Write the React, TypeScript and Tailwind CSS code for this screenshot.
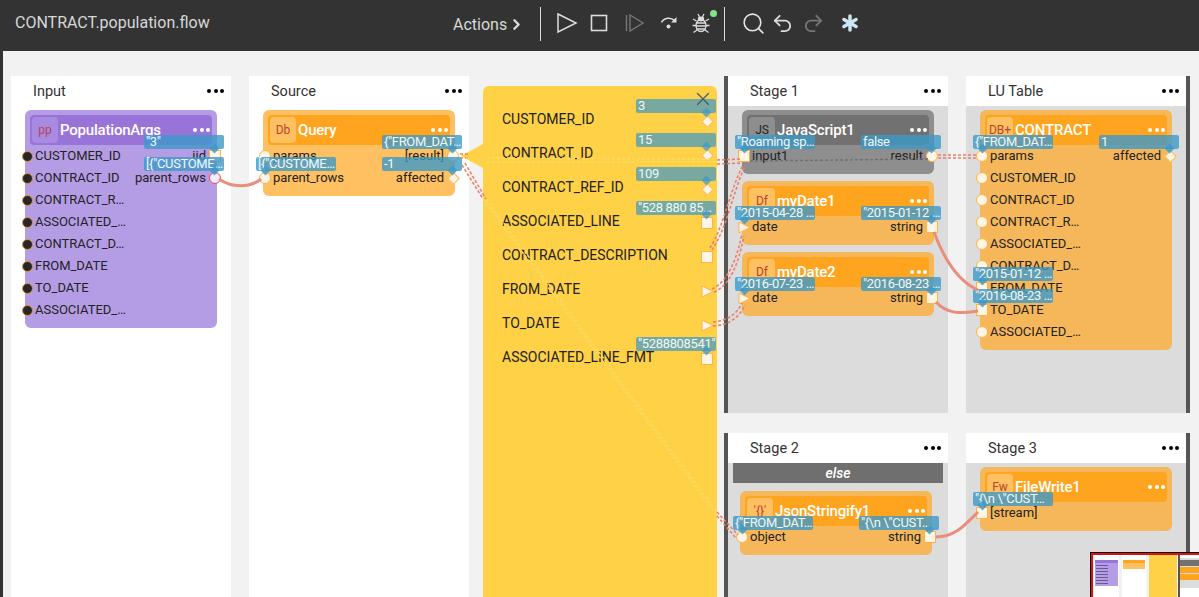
import { ReactNode } from 'react'
import { ChevronRight, Search, Undo2, Redo2, Asterisk, X } from 'lucide-react'

type PortKind = 'circle' | 'square' | 'diamond' | 'triangle' | 'dark' | 'red'

interface Side {
  label?: string
  port: PortKind
  badge?: string
}

type Tone = 'purple' | 'orange' | 'stage' | 'gray'

const tones = {
  purple: { body: 'bg-[#b59de6]', head: 'bg-[#9874d9]', icon: 'bg-[#a88ae0] text-[#b5455f]' },
  orange: { body: 'bg-[#ffc062]', head: 'bg-[#ffa41e]', icon: 'bg-[#ffc062] text-[#b5452f]' },
  stage: { body: 'bg-[#f5b75a]', head: 'bg-[#ffa41e]', icon: 'bg-[#ffc062] text-[#b5452f]' },
  gray: { body: 'bg-[#8e8e8e]', head: 'bg-[#717171]', icon: 'bg-[#8e8e8e] text-[#222222]' },
}

function Dots({ color }: { color: string }) {
  return (
    <div className="flex gap-[2.5px]">
      <span className={`h-[4px] w-[4px] rounded-full ${color}`} />
      <span className={`h-[4px] w-[4px] rounded-full ${color}`} />
      <span className={`h-[4px] w-[4px] rounded-full ${color}`} />
    </div>
  )
}

function Port({ kind }: { kind: PortKind }) {
  if (kind === 'dark') return <span className="block h-[11px] w-[11px] rounded-full border border-[#e09a30] bg-[#26262b]" />
  if (kind === 'circle') return <span className="block h-[12px] w-[12px] shrink-0 rounded-full border border-[#ffb347] bg-[#fff5e6]" />
  if (kind === 'red') return <span className="block h-[12px] w-[12px] rounded-full border border-[#e8455a] bg-[#f3ecfa]" />
  if (kind === 'square') return <span className="block h-[12px] w-[12px] shrink-0 border border-[#ffb347] bg-[#fff5e6]" />
  if (kind === 'diamond') return <span className="block h-[9px] w-[9px] rotate-45 border border-[#ffb347] bg-[#fff5e6]" />
  return (
    <svg width="13" height="13" viewBox="0 0 13 13" className="block shrink-0">
      <path d="M1 1 L12 6.5 L1 12 Z" fill="#fff5e6" stroke="#ffb347" />
    </svg>
  )
}

function Badge({ text, side }: { text: string; side: 'left' | 'right' }) {
  return (
    <div className={`absolute top-[-10px] z-10 h-[14px] w-[80px] ${side === 'left' ? 'left-[-7px]' : 'right-[-7px]'}`}>
      <div className="h-[14px] overflow-hidden whitespace-nowrap rounded-[2px] bg-[#3d98c8]/80 px-[2px] text-[13px] leading-[14px] tracking-[-0.35px] text-[#eef8fb]">
        {text}
      </div>
      <div
        className={`absolute top-[10px] h-[7px] w-[7px] rotate-45 bg-[#3d98c8]/80 ${side === 'left' ? 'left-[6px]' : 'right-[6px]'}`}
      />
    </div>
  )
}

function Row({ left, right }: { left?: Side; right?: Side }) {
  return (
    <div className="relative flex h-[22px] items-center justify-between pl-[10px] pr-[11px] text-[13px] text-[#222222]">
      <span>{left?.label}</span>
      <span>{right?.label}</span>
      {left && (
        <>
          <div className="absolute left-[-4px] top-1/2 flex h-[12px] w-[12px] -translate-y-1/2 items-center justify-center">
            <Port kind={left.port} />
          </div>
          {left.badge && <Badge text={left.badge} side="left" />}
        </>
      )}
      {right && (
        <>
          <div className="absolute right-[-4px] top-1/2 flex h-[12px] w-[12px] -translate-y-1/2 items-center justify-center">
            <Port kind={right.port} />
          </div>
          {right.badge && <Badge text={right.badge} side="right" />}
        </>
      )}
    </div>
  )
}

function FlowNode({ tone, icon, title, children }: { tone: Tone; icon: string; title: string; children: ReactNode }) {
  const t = tones[tone]
  return (
    <div className={`w-[192px] rounded-[6px] pb-[7px] pt-[5px] ${t.body}`}>
      <div className={`mx-[5px] flex h-[30px] items-center rounded-[4px] pl-[2px] pr-[2px] ${t.head}`}>
        <div className={`flex h-[26px] w-[26px] items-center justify-center rounded-[4px] text-[12px] ${t.icon}`}>{icon}</div>
        <span className="ml-[2px] flex-1 text-[15px] font-medium leading-[30px] tracking-[-0.2px] text-white">{title}</span>
        <Dots color="bg-white" />
      </div>
      {children}
    </div>
  )
}

function ColumnHead({ title }: { title: string }) {
  return (
    <div className="flex h-[30px] items-center justify-between bg-white pl-[22px] pr-[7px]">
      <span className="pt-[1px] text-[14.5px] text-[#333333]">{title}</span>
      <Dots color="bg-black" />
    </div>
  )
}

function Stage({ title, className, children }: { title: string; className: string; children: ReactNode }) {
  return (
    <div className={`bg-[#dcdcdc] ${className}`}>
      <ColumnHead title={title} />
      {children}
    </div>
  )
}

function YellowRow({ label, port, badge }: { label: string; port: PortKind; badge?: string }) {
  return (
    <div className="relative flex h-[34px] items-center pl-[19px] text-[14px] text-[#222222]">
      {label}
      <div className="absolute right-[4px] top-[13px] flex h-[12px] w-[12px] items-center justify-center">
        <Port kind={port} />
      </div>
      {badge && (
        <div className="absolute right-[1px] top-[-3px] h-[14px] w-[80px]">
          <div className="h-[14px] overflow-hidden whitespace-nowrap rounded-[2px] bg-[#3d98c8]/70 px-[2px] text-[13px] leading-[14px] tracking-[-0.35px] text-[#eef8fb]">
            {badge}
          </div>
          <div className="absolute right-[6px] top-[10px] h-[7px] w-[7px] rotate-45 bg-[#3d98c8]/70" />
        </div>
      )}
    </div>
  )
}

function ToolbarIcons() {
  return (
    <>
      <svg width="22" height="22" viewBox="0 0 22 22" className="ml-[15px]" fill="none" stroke="#dddddd" strokeWidth="1.5">
        <path d="M2 2 L20 11 L2 20 Z" />
      </svg>
      <svg width="18" height="18" viewBox="0 0 18 18" className="ml-[12px]" fill="none" stroke="#dddddd" strokeWidth="1.6">
        <rect x="1.5" y="1.5" width="15" height="15" />
      </svg>
      <svg width="20" height="20" viewBox="0 0 20 20" className="ml-[17px]" fill="none" stroke="#777777" strokeWidth="1.4">
        <path d="M1.5 2 V18 M5 2 L18 10 L5 18 Z" />
      </svg>
      <svg width="18" height="14" viewBox="0 0 18 14" className="ml-[15px]" fill="none" stroke="#dddddd" strokeWidth="1.6">
        <path d="M1.5 6.5 C4 1.5 11 1 14.5 4.5" />
        <path d="M16.5 1 L16.5 6.5 L11 6.5 Z" fill="#dddddd" stroke="none" />
        <circle cx="8.5" cy="10.5" r="2" fill="#dddddd" stroke="none" />
      </svg>
      <div className="relative ml-[14px]">
        <svg width="18" height="22" viewBox="0 0 18 22" className="block" fill="none" stroke="#dddddd" strokeWidth="1.3">
          <path d="M6 2 L7.5 5 M12 2 L10.5 5" />
          <ellipse cx="9" cy="7" rx="3.2" ry="2.4" fill="#dddddd" stroke="none" />
          <ellipse cx="9" cy="13.5" rx="5" ry="6" />
          <path d="M4 11 H14 M4 14 H14 M4.5 17 H13.5" />
          <path d="M4.5 9 L1 7 M13.5 9 L17 7 M4 13.5 H0.5 M14 13.5 H17.5 M5 18 L1.5 20.5 M13 18 L16.5 20.5" />
        </svg>
        <span className="absolute right-[-7px] top-[-2px] h-[7px] w-[7px] rounded-full bg-[#86e28b]" />
      </div>
    </>
  )
}

function Header() {
  return (
    <div className="flex h-[51px] items-start bg-[#333333] pl-[12px]">
      <span className="mt-[13px] w-[438px] text-[16px] leading-[20px] text-[#d8d8d8]">CONTRACT.population.flow</span>
      <span className="mt-[15px] text-[16px] leading-[20px] text-[#d8d8d8]">Actions</span>
      <ChevronRight size={17} strokeWidth={3.2} className="ml-[1px] mt-[16px] text-[#e0e0e0]" />
      <div className="ml-[15px] mt-[7px] h-[34px] w-px bg-[#dddddd]" />
      <div className="flex h-[46px] items-center">
        <ToolbarIcons />
      </div>
      <div className="ml-[14px] mt-[7px] h-[34px] w-px bg-[#dddddd]" />
      <div className="flex h-[46px] items-center">
        <Search size={25} strokeWidth={1.5} className="ml-[16px] text-[#e4e4e4]" />
        <Undo2 size={23} strokeWidth={1.9} className="ml-[5px] text-[#dddddd]" />
        <Redo2 size={23} strokeWidth={1.9} className="ml-[8px] text-[#777777]" />
        <Asterisk size={28} strokeWidth={3} className="ml-[11px] text-[#cfe6f2]" />
      </div>
    </div>
  )
}

function DoubleWire({ a, b, color = '#e9806c' }: { a: string; b: string; color?: string }) {
  return (
    <g fill="none" stroke={color} strokeWidth="1.6" strokeDasharray="3 2">
      <path d={a} />
      <path d={b} />
    </g>
  )
}

function Wires() {
  return (
    <svg className="pointer-events-none absolute left-[-3px] top-0 z-20" width="1199" height="597" viewBox="0 0 1199 597">
      <g fill="none" stroke="#ea8d7c" strokeWidth="3">
        <path d="M219 179 C232 188 250 188 261 179" />
        <path d="M934 232 C945 262 960 282 978 290" />
        <path d="M936 302 C947 314 960 314 978 311" />
        <path d="M936 537 C955 537 965 525 978 512" />
      </g>
      {/* pale part where the wires cross the yellow panel */}
      <DoubleWire color="#ffd95e" a="M487 158 L717 159" b="M487 162 L717 162" />
      <DoubleWire color="#ffd95e" a="M483 199 L717 516" b="M486 199 L717 512" />
      <DoubleWire a="M460 154 L470 154" b="M460 158 L466 158" />
      <DoubleWire a="M717 160 L742 159" b="M717 164 L742 163" />
      <DoubleWire a="M938 155 L978 155" b="M938 158 L978 158" />
      <DoubleWire a="M462 165 L483 199" b="M465 163 L486 199" />
      <DoubleWire a="M717 516 L736 538" b="M717 512 L738 535" />
      <DoubleWire a="M710 248 C724 226 730 190 743 165" b="M712 250 C727 228 733 192 745 166" />
      <DoubleWire a="M712 289 C727 282 736 262 742 234" b="M714 292 C729 286 738 266 744 236" />
      <DoubleWire a="M713 322 C727 321 737 314 742 303" b="M713 326 C729 325 739 318 745 305" />
      <path d="M750 161 L928 159" fill="none" stroke="#6f6f6f" strokeWidth="1.4" strokeDasharray="3 2" />
    </svg>
  )
}

function MiniRows({ count }: { count: number }) {
  return (
    <div className="flex flex-col gap-[2px] pl-[1px] pt-[2px]">
      {Array.from({ length: count }, (_, i) => (
        <div key={i} className="h-px w-[12px] bg-[#6d5a94]" />
      ))}
    </div>
  )
}

function MiniMap() {
  return (
    <div className="absolute left-[1087px] top-[552px] z-30 h-[45px] w-[109px] bg-black pl-px pt-px">
      <div className="flex h-full border-l-2 border-t-2 border-[#e01010] bg-[#f2f2f2] pl-[1px]">
        <div className="mr-[3px] h-full w-[25px] bg-white px-[1px] pt-[5px]">
          <div className="h-[26px] bg-[#b59de6]">
            <div className="h-[3px] bg-[#9874d9]" />
            <MiniRows count={7} />
          </div>
        </div>
        <div className="mr-[3px] h-full w-[24px] bg-white px-[1px] pt-[5px]">
          <div className="h-[9px] bg-[#ffc062]">
            <div className="h-[3px] bg-[#ffa41e]" />
          </div>
        </div>
        <div className="mr-px h-full w-[28px] bg-[#ffd147]" />
        <div className="h-full flex-1 border-l-2 border-[#555555] bg-white">
          <div className="mt-[3px] h-[30px] bg-[#dcdcdc] pt-[2px]">
            <div className="h-[6px] bg-[#717171]" />
            <div className="mt-px h-[6px] bg-[#ffa41e]" />
            <div className="mt-px h-[6px] bg-[#ffa41e]" />
          </div>
        </div>
      </div>
    </div>
  )
}

export default function App() {
  return (
    <div className="relative flex h-[597px] w-[1199px] flex-col overflow-hidden border-l-[3px] border-[#333333] bg-[#f2f2f2] font-['Roboto',sans-serif]">
      <Header />
      <div className="flex min-h-0 flex-1 pl-[8px] pt-[25px]">
        <div className="mr-[18px] w-[220px] bg-white">
          <ColumnHead title="Input" />
          <div className="pl-[14px] pt-[4px]">
            <FlowNode tone="purple" icon="pp" title="PopulationArgs">
              <Row left={{ label: 'CUSTOMER_ID', port: 'dark' }} right={{ label: 'iid', port: 'square', badge: '"3"' }} />
              <Row
                left={{ label: 'CONTRACT_ID', port: 'dark' }}
                right={{ label: 'parent_rows', port: 'red', badge: '[{"CUSTOME…' }}
              />
              <Row left={{ label: 'CONTRACT_R…', port: 'dark' }} />
              <Row left={{ label: 'ASSOCIATED_…', port: 'dark' }} />
              <Row left={{ label: 'CONTRACT_D…', port: 'dark' }} />
              <Row left={{ label: 'FROM_DATE', port: 'dark' }} />
              <Row left={{ label: 'TO_DATE', port: 'dark' }} />
              <Row left={{ label: 'ASSOCIATED_…', port: 'dark' }} />
            </FlowNode>
          </div>
        </div>

        <div className="mr-[14px] w-[220px] bg-white">
          <ColumnHead title="Source" />
          <div className="pl-[14px] pt-[4px]">
            <FlowNode tone="orange" icon="Db" title="Query">
              <Row
                left={{ label: 'params', port: 'circle' }}
                right={{ label: '[result]', port: 'circle', badge: '{"FROM_DAT…' }}
              />
              <Row
                left={{ label: 'parent_rows', port: 'circle', badge: '[{"CUSTOME…' }}
                right={{ label: 'affected', port: 'diamond', badge: '-1' }}
              />
            </FlowNode>
          </div>
        </div>

        <div className="relative mr-[7px] mt-[10px] w-[234px] rounded-t-[6px] bg-[#ffd147] pt-[16px]">
          <div className="absolute left-[-22px] top-[58px] h-0 w-0 border-y-[12px] border-r-[22px] border-y-transparent border-r-[#ffd147]" />
          <X size={22} strokeWidth={1.4} className="absolute right-[3px] top-[2px] z-10 text-[#3c5f6c]" />
          <YellowRow label="CUSTOMER_ID" port="diamond" badge="3" />
          <YellowRow label="CONTRACT_ID" port="diamond" badge="15" />
          <YellowRow label="CONTRACT_REF_ID" port="diamond" badge="109" />
          <YellowRow label="ASSOCIATED_LINE" port="square" badge={'"528 880 85…'} />
          <YellowRow label="CONTRACT_DESCRIPTION" port="square" />
          <YellowRow label="FROM_DATE" port="triangle" />
          <YellowRow label="TO_DATE" port="triangle" />
          <YellowRow label="ASSOCIATED_LINE_FMT" port="square" badge={'"5288808541"'} />
        </div>

        <div className="mr-[18px] flex w-[224px] flex-col gap-[20px]">
          <Stage title="Stage 1" className="h-[337px] border-l-4 border-[#555555]">
            <div className="flex flex-col gap-[7px] pl-[14px] pt-[4px]">
              <FlowNode tone="gray" icon="JS" title="JavaScript1">
                <Row
                  left={{ label: 'input1', port: 'square', badge: '"Roaming sp…' }}
                  right={{ label: 'result', port: 'circle', badge: 'false' }}
                />
              </FlowNode>
              <FlowNode tone="stage" icon="Df" title="myDate1">
                <Row
                  left={{ label: 'date', port: 'triangle', badge: '"2015-04-28 …' }}
                  right={{ label: 'string', port: 'square', badge: '"2015-01-12 …' }}
                />
              </FlowNode>
              <FlowNode tone="stage" icon="Df" title="myDate2">
                <Row
                  left={{ label: 'date', port: 'triangle', badge: '"2016-07-23 …' }}
                  right={{ label: 'string', port: 'square', badge: '"2016-08-23 …' }}
                />
              </FlowNode>
            </div>
          </Stage>
          <Stage title="Stage 2" className="flex-1 border-l-4 border-[#555555]">
            <div className="mx-[5px] h-[20px] bg-[#6f6f6f] text-center text-[14px] font-medium italic leading-[20px] text-white">
              else
            </div>
            <div className="pl-[12px] pt-[8px]">
              <FlowNode tone="stage" icon="'{}'" title="JsonStringify1">
                <Row
                  left={{ label: 'object', port: 'circle', badge: '{"FROM_DAT…' }}
                  right={{ label: 'string', port: 'square', badge: '"{\\n  \\"CUST…' }}
                />
              </FlowNode>
            </div>
          </Stage>
        </div>

        <div className="flex w-[224px] flex-col gap-[20px]">
          <Stage title="LU Table" className="h-[337px] border-r-4 border-[#555555]">
            <div className="pl-[14px] pt-[4px]">
              <FlowNode tone="stage" icon="DB+" title="CONTRACT">
                <Row
                  left={{ label: 'params', port: 'circle', badge: '{"FROM_DAT…' }}
                  right={{ label: 'affected', port: 'diamond', badge: '1' }}
                />
                <Row left={{ label: 'CUSTOMER_ID', port: 'circle' }} />
                <Row left={{ label: 'CONTRACT_ID', port: 'circle' }} />
                <Row left={{ label: 'CONTRACT_R…', port: 'circle' }} />
                <Row left={{ label: 'ASSOCIATED_…', port: 'circle' }} />
                <Row left={{ label: 'CONTRACT_D…', port: 'circle' }} />
                <Row left={{ label: 'FROM_DATE', port: 'square', badge: '"2015-01-12 …' }} />
                <Row left={{ label: 'TO_DATE', port: 'square', badge: '"2016-08-23 …' }} />
                <Row left={{ label: 'ASSOCIATED_…', port: 'circle' }} />
              </FlowNode>
            </div>
          </Stage>
          <Stage title="Stage 3" className="flex-1 border-r-4 border-[#555555]">
            <div className="pl-[14px] pt-[4px]">
              <FlowNode tone="stage" icon="Fw" title="FileWrite1">
                <Row left={{ label: '[stream]', port: 'square', badge: '"{\\n  \\"CUST…' }} />
              </FlowNode>
            </div>
          </Stage>
        </div>
      </div>
      <Wires />
      <MiniMap />
    </div>
  )
}
